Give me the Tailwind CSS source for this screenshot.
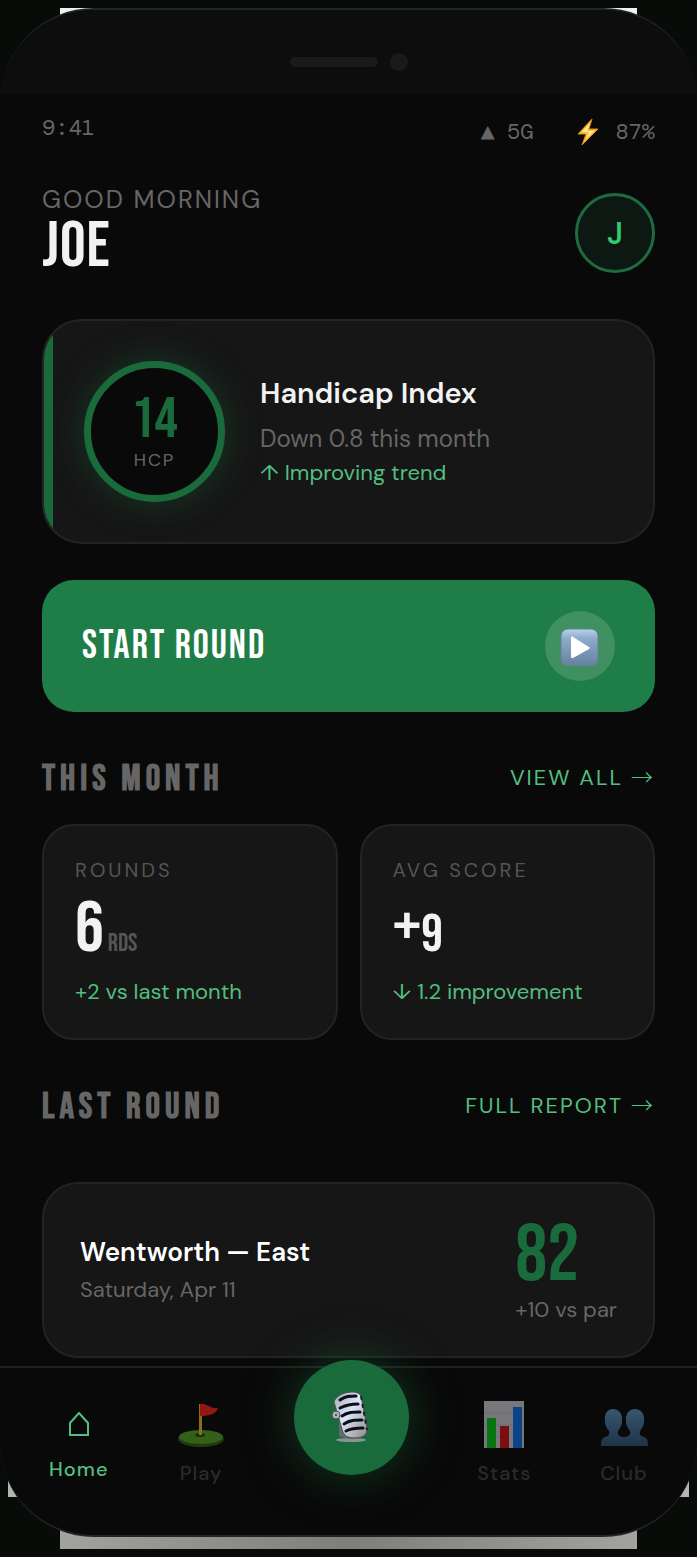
<!DOCTYPE html>
<html lang="en">

<head>
    <meta charset="UTF-8">
    <meta name="viewport" content="width=device-width, initial-scale=1.0">
    <title>Golf Companion</title>
    <script src="https://cdn.jsdelivr.net/npm/@tailwindcss/browser@4"></script>
</head>

<body class="bg-[#070c08] font-['DM_Sans',Inter,sans-serif] text-[#f2f2f2]">
    <div class="relative isolate pt-2 pb-5">
        <!-- Backdrop behind the phone -->
        <div class="absolute -z-10 inset-x-[60px] top-2 h-10 bg-[#f0f0ee]"></div>
        <div class="absolute -z-10 inset-x-2 bottom-[60px] h-20 bg-[#b4b4b2]"></div>
        <div class="absolute -z-10 inset-x-[60px] bottom-2 h-10 bg-linear-to-r from-[#a2a2a0] via-[#7e7e7b] to-[#a2a2a0]"></div>

        <!-- Phone -->
        <div class="rounded-[94px] border-y-2 border-[#242424] bg-[#090909] overflow-hidden">
            <!-- Notch -->
            <div class="flex items-center justify-center gap-3 bg-[#0d0d0d] pt-[43px] pb-[23px]">
                <div class="w-[88px] h-[10px] rounded-full bg-[#1a1a1a]"></div>
                <div class="size-[18px] rounded-full bg-[#1a1a1a]"></div>
            </div>

            <!-- Status bar -->
            <div class="flex justify-between px-[42px] pt-5 h-[92px] text-[22px] leading-7 text-[#666] font-['DM_Mono','Roboto_Mono','Liberation_Mono',monospace]">
                <span>9:41</span>
                <div class="flex items-center h-9 gap-11">
                    <span class="flex items-center gap-3"><span class="text-[24px]">▲</span>5G</span>
                    <span class="flex items-center gap-4">
                        <svg class="w-[22px] h-[28px]" viewBox="0 0 22 28">
                            <path d="M15 1 1 16h8L5 27 21 11h-9z" fill="#ffbe35" stroke="#d48a12" stroke-width="1" stroke-linejoin="round" />
                            <path d="M13 5 5 14h7L9 21l8-8h-7z" fill="#ffe993" />
                        </svg>
                        87%
                    </span>
                </div>
            </div>

            <main class="px-[42px] pb-2">
                <!-- Greeting -->
                <header class="flex items-center justify-between">
                    <div>
                        <p class="text-[25px] leading-7 tracking-[2px] text-[#666]">GOOD MORNING</p>
                        <h1 class="font-['Bebas_Neue','Open_Sans_Condensed',sans-serif] text-[64px] leading-[66px] tracking-[1px]">JOE</h1>
                    </div>
                    <button class="size-20 rounded-full border-3 border-[#1f6b40] bg-[#0d1812] text-[30px] font-semibold text-[#2ecc71]">J</button>
                </header>

                <!-- Handicap -->
                <section class="relative overflow-hidden mt-[39px] flex items-center gap-[35px] rounded-[40px] border-2 border-[#232323] bg-[#161616] p-10">
                    <div class="absolute inset-y-0 left-0 w-[9px] bg-[#1a6b3c]"></div>
                    <div class="size-[141px] shrink-0 rounded-full border-7 border-[#1a6b3c] bg-[#090909] flex flex-col items-center justify-center shadow-[0_0_36px_#1a6b3c66]">
                        <span class="font-['Bebas_Neue','Open_Sans_Condensed',sans-serif] text-[58px] leading-[56px] text-[#1a6b3c]">14</span>
                        <span class="text-[18px] leading-6 tracking-[2px] text-[#666]">HCP</span>
                    </div>
                    <div>
                        <h2 class="text-[29px] leading-9 font-semibold">Handicap Index</h2>
                        <p class="mt-[10px] text-[24px] leading-9 text-[#666]">Down 0.8 this month</p>
                        <p class="text-[22px] leading-8 text-[#52be80]">↑ Improving trend</p>
                    </div>
                </section>

                <!-- Start round -->
                <button class="mt-9 w-full flex items-center justify-between rounded-[32px] bg-[#1f7d47] px-10 py-[31px]">
                    <span class="font-['Bebas_Neue','Open_Sans_Condensed',sans-serif] text-[40px] leading-10 tracking-[2px] text-white">START ROUND</span>
                    <span class="size-[70px] rounded-full bg-white/15 flex items-center justify-center">
                        <svg class="size-10" viewBox="0 0 40 40">
                            <defs>
                                <linearGradient id="play" x1="0" y1="0" x2="0" y2="1">
                                    <stop offset="0" stop-color="#b9d3ee" />
                                    <stop offset=".25" stop-color="#8fabcb" />
                                    <stop offset="1" stop-color="#66819f" />
                                </linearGradient>
                            </defs>
                            <rect x="1" y="3" width="37" height="37" rx="7" fill="url(#play)" stroke="#5d8290" />
                            <path d="M11 12v19c0 1 1 1 2 1l16-9c1-1 1-2 0-2l-16-10c-1-1-2 0-2 1z" fill="#fff" />
                        </svg>
                    </span>
                </button>

                <!-- This month -->
                <div class="mt-[50px] flex items-start justify-between">
                    <h2 class="font-['Bebas_Neue','Open_Sans_Condensed',sans-serif] text-[36px] leading-9 font-bold tracking-[5px] text-[#666]">THIS MONTH</h2>
                    <a href="#" class="text-[22px] leading-8 tracking-[2px] text-[#52be80]">VIEW ALL <span class="font-light leading-none font-['Noto_Sans_CJK_JP',sans-serif]">→</span></a>
                </div>
                <div class="mt-[26px] grid grid-cols-2 gap-[22px]">
                    <section class="rounded-[32px] border-2 border-[#232323] bg-[#161616] px-[31px] py-8">
                        <h3 class="text-[20px] leading-6 tracking-[3px] text-[#555]">ROUNDS</h3>
                        <p class="mt-3 flex items-baseline gap-1 font-['Bebas_Neue','Open_Sans_Condensed',sans-serif] text-[72px] leading-none">6<span class="text-[25px] text-[#555]">RDS</span></p>
                        <p class="mt-3 text-[22px] leading-7 text-[#52be80]">+2 vs last month</p>
                    </section>
                    <section class="rounded-[32px] border-2 border-[#232323] bg-[#161616] px-[31px] py-8">
                        <h3 class="text-[20px] leading-6 tracking-[3px] text-[#555]">AVG SCORE</h3>
                        <p class="mt-3 font-['Bebas_Neue','Open_Sans_Condensed',sans-serif] text-[72px] leading-none">+<span class="text-[54px]">9</span></p>
                        <p class="mt-3 text-[22px] leading-7 text-[#52be80]">↓ 1.2 improvement</p>
                    </section>
                </div>

                <!-- Last round -->
                <div class="mt-[50px] flex items-start justify-between">
                    <h2 class="font-['Bebas_Neue','Open_Sans_Condensed',sans-serif] text-[36px] leading-9 font-bold tracking-[5px] text-[#666]">LAST ROUND</h2>
                    <a href="#" class="text-[22px] leading-8 tracking-[2px] text-[#52be80]">FULL REPORT <span class="font-light leading-none font-['Noto_Sans_CJK_JP',sans-serif]">→</span></a>
                </div>
                <section class="mt-14 flex items-center justify-between rounded-[36px] border-2 border-[#232323] bg-[#161616] px-9 py-8">
                    <div>
                        <h3 class="text-[26px] leading-9 font-semibold text-white">Wentworth — East</h3>
                        <p class="mt-1 text-[22px] leading-8 text-[#666]">Saturday, Apr 11</p>
                    </div>
                    <div>
                        <p class="font-['Bebas_Neue','Open_Sans_Condensed',sans-serif] text-[80px] leading-none text-[#1a6b3c]">82</p>
                        <p class="text-[22px] leading-7 text-[#666]">+10 vs par</p>
                    </div>
                </section>
            </main>

            <!-- Bottom nav -->
            <nav class="flex items-center justify-between border-t-2 border-[#202020] px-[49px] pt-[33px] pb-[50px] text-[20px] leading-6 font-medium tracking-[1px] text-[#2b2b2b]">
                <a href="#" class="flex flex-col items-center gap-3 text-[#52be80]">
                    <svg class="size-10" viewBox="0 0 40 40" fill="none" stroke="#52be80" stroke-width="2">
                        <path d="M11 30V18l9-10 9 10v12z" />
                    </svg>
                    Home
                </a>
                <a href="#" class="flex flex-col items-center gap-3">
                    <svg class="size-12" viewBox="0 0 48 48">
                        <ellipse cx="24" cy="38" rx="23" ry="8" fill="#1d3a0d" />
                        <ellipse cx="24" cy="36" rx="22" ry="7" fill="#34611a" />
                        <ellipse cx="23" cy="34" rx="5" ry="2" fill="#193309" />
                        <path d="M22 3h3v31h-3z" fill="#8a6f17" />
                        <path d="M23 3c7-2 9 5 18 4-2 6-8 8-18 8z" fill="#8f1714" />
                    </svg>
                    Play
                </a>
                <button aria-label="Voice caddie" class="relative -mt-13 size-[115px] rounded-full bg-[#1a6b3c] flex items-center justify-center shadow-[0_0_48px_#1a6b3c80]">
                    <svg class="w-10 h-[54px]" viewBox="0 0 40 54">
                        <defs>
                            <linearGradient id="mic" x1="0" y1="0" x2="1" y2="1">
                                <stop offset="0" stop-color="#a3a7ae" />
                                <stop offset=".45" stop-color="#dce6f8" />
                                <stop offset="1" stop-color="#8d8483" />
                            </linearGradient>
                        </defs>
                        <ellipse cx="20" cy="50" rx="15" ry="2" fill="#8a9490" />
                        <path d="M8 24v22l10 3 10-1" fill="#666a6c" />
                        <path d="M3 12C5 3 26-2 30 6l6 31c1 8-4 11-13 11-8 0-11-4-12-9z" fill="url(#mic)" stroke="#4b4f54" />
                        <path d="M9 10c5-4 10-4 16-4M9 18c6-3 11-4 18-4M11 26c6-4 11-4 18-4M13 34c6-4 11-4 18-4M15 41c6-3 11-3 17-3" fill="none" stroke="#0b1018" stroke-width="3" stroke-linecap="round" />
                        <path d="m30 6 6 34" stroke="#1a1d22" stroke-width="2" stroke-dasharray="4 4" />
                        <circle cx="5" cy="25" r="4" fill="#aeb4b8" stroke="#4b4f54" />
                        <circle cx="5" cy="25" r="1" fill="#33373a" />
                    </svg>
                </button>
                <a href="#" class="flex flex-col items-center gap-3">
                    <svg class="size-12" viewBox="0 0 48 48">
                        <path d="M4 0h40v47H4z" fill="#77777c" />
                        <path d="M4 12h40M4 24h40M4 36h40" stroke="#6c6c71" />
                        <path d="M7 17h9v30H7z" fill="#07760f" />
                        <path d="M20 25h9v22h-9z" fill="#7c0d10" />
                        <path d="M33 6h9v41h-9z" fill="#0c4286" />
                    </svg>
                    Stats
                </a>
                <a href="#" class="flex flex-col items-center gap-3">
                    <svg class="size-12" viewBox="0 0 48 48">
                        <defs>
                            <linearGradient id="club" x1="0" y1="0" x2="0" y2="1">
                                <stop offset="0" stop-color="#385570" />
                                <stop offset="1" stop-color="#1f3347" />
                            </linearGradient>
                        </defs>
                        <path d="M13 8c6 0 10 5 9 12 0 5-2 7-4 10-1 4 1 5 5 6h2c4-1 6-2 5-6-2-3-4-5-4-10-1-7 3-12 9-12s10 5 9 12c0 5-2 7-4 10-1 4 1 5 4 6 3 1 4 3 4 9H1c0-6 1-8 4-9 3-1 5-2 4-6-2-3-4-5-4-10-1-7 2-12 8-12z" fill="url(#club)" />
                    </svg>
                    Club
                </a>
            </nav>
        </div>
    </div>
</body>

</html>
